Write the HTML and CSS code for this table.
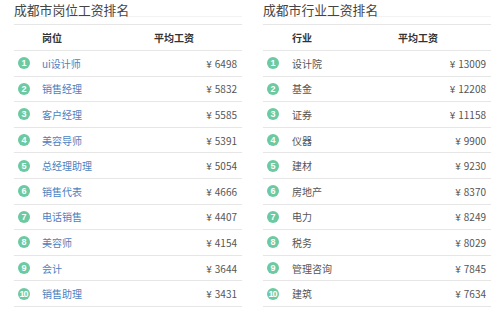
FILE: index.html
```html
<!DOCTYPE html>
<html lang="zh-CN">
<head>
	<meta charset="UTF-8">
	<title>成都市工资排名</title>
	<link rel="stylesheet" href="styles.css">
</head>
<body>
	<div class="page">
		<div class="panel">
			<h2 class="panel-title">成都市岗位工资排名</h2>
			<div class="rank rank-job">
				<div class="rank-head">
					<span></span><span>岗位</span><span>平均工资</span>
				</div>
				<div class="rank-row"><i class="num">1</i><a href="#">ui设计师</a><span class="pay"><b>¥</b>6498</span></div>
				<div class="rank-row"><i class="num">2</i><a href="#">销售经理</a><span class="pay"><b>¥</b>5832</span></div>
				<div class="rank-row"><i class="num">3</i><a href="#">客户经理</a><span class="pay"><b>¥</b>5585</span></div>
				<div class="rank-row"><i class="num">4</i><a href="#">美容导师</a><span class="pay"><b>¥</b>5391</span></div>
				<div class="rank-row"><i class="num">5</i><a href="#">总经理助理</a><span class="pay"><b>¥</b>5054</span></div>
				<div class="rank-row"><i class="num">6</i><a href="#">销售代表</a><span class="pay"><b>¥</b>4666</span></div>
				<div class="rank-row"><i class="num">7</i><a href="#">电话销售</a><span class="pay"><b>¥</b>4407</span></div>
				<div class="rank-row"><i class="num">8</i><a href="#">美容师</a><span class="pay"><b>¥</b>4154</span></div>
				<div class="rank-row"><i class="num">9</i><a href="#">会计</a><span class="pay"><b>¥</b>3644</span></div>
				<div class="rank-row"><i class="num num-wide">10</i><a href="#">销售助理</a><span class="pay"><b>¥</b>3431</span></div>
			</div>
		</div>
		<div class="panel">
			<h2 class="panel-title">成都市行业工资排名</h2>
			<div class="rank rank-industry">
				<div class="rank-head">
					<span></span><span>行业</span><span>平均工资</span>
				</div>
				<div class="rank-row"><i class="num">1</i><span class="name">设计院</span><span class="pay"><b>¥</b>13009</span></div>
				<div class="rank-row"><i class="num">2</i><span class="name">基金</span><span class="pay"><b>¥</b>12208</span></div>
				<div class="rank-row"><i class="num">3</i><span class="name">证券</span><span class="pay"><b>¥</b>11158</span></div>
				<div class="rank-row"><i class="num">4</i><span class="name">仪器</span><span class="pay"><b>¥</b>9900</span></div>
				<div class="rank-row"><i class="num">5</i><span class="name">建材</span><span class="pay"><b>¥</b>9230</span></div>
				<div class="rank-row"><i class="num">6</i><span class="name">房地产</span><span class="pay"><b>¥</b>8370</span></div>
				<div class="rank-row"><i class="num">7</i><span class="name">电力</span><span class="pay"><b>¥</b>8249</span></div>
				<div class="rank-row"><i class="num">8</i><span class="name">税务</span><span class="pay"><b>¥</b>8029</span></div>
				<div class="rank-row"><i class="num">9</i><span class="name">管理咨询</span><span class="pay"><b>¥</b>7845</span></div>
				<div class="rank-row"><i class="num num-wide">10</i><span class="name">建筑</span><span class="pay"><b>¥</b>7634</span></div>
			</div>
		</div>
	</div>
</body>
</html>
```

FILE: styles.css
```css
body {
	margin: 0;
	background-color: #fff;
	font-family: "Noto Sans CJK SC", "Liberation Sans", sans-serif;
	color: #444;
}

.page {
	display: flex;
	gap: 21px;
	padding-left: 14px;
}

.panel {
	width: 228px;
}

.panel-title {
	margin: 0;
	height: 16px;
	font-size: 12.8px;
	font-weight: normal;
	line-height: 20px;
	color: #444;
	border-bottom: 1px solid #f3f3f3;
	overflow: visible;
}

.rank {
	margin-top: 7px;
	border-top: 1px solid #e6e6e6;
	font-size: 10px;
}

.rank-head,
.rank-row {
	display: grid;
	grid-template-columns: 28px 1fr 88px;
	align-items: center;
	border-bottom: 1px solid #e6e6e6;
}

.rank-industry .rank-head,
.rank-industry .rank-row {
	grid-template-columns: 29px 1fr 93px;
}

.rank-head {
	height: 25px;
	font-weight: bold;
	color: #333;
}

.rank-row {
	height: 24.6px;
}

.num {
	justify-self: start;
	margin-left: 4px;
	width: 12px;
	height: 12px;
	border-radius: 50%;
	background-color: #6ccaa2;
	color: #fff;
	font-style: normal;
	font-weight: bold;
	font-size: 9px;
	line-height: 12px;
	text-align: center;
	font-family: "Liberation Sans", sans-serif;
}

.num-wide {
	letter-spacing: -1px;
	text-indent: -1px;
}

.rank-row a {
	color: #4d7fc0;
	text-decoration: none;
}

.name {
	color: #555;
}

.pay {
	justify-self: end;
	padding-right: 5px;
	color: #555;
}

.pay b {
	font-weight: normal;
	margin-right: 3px;
}
```
